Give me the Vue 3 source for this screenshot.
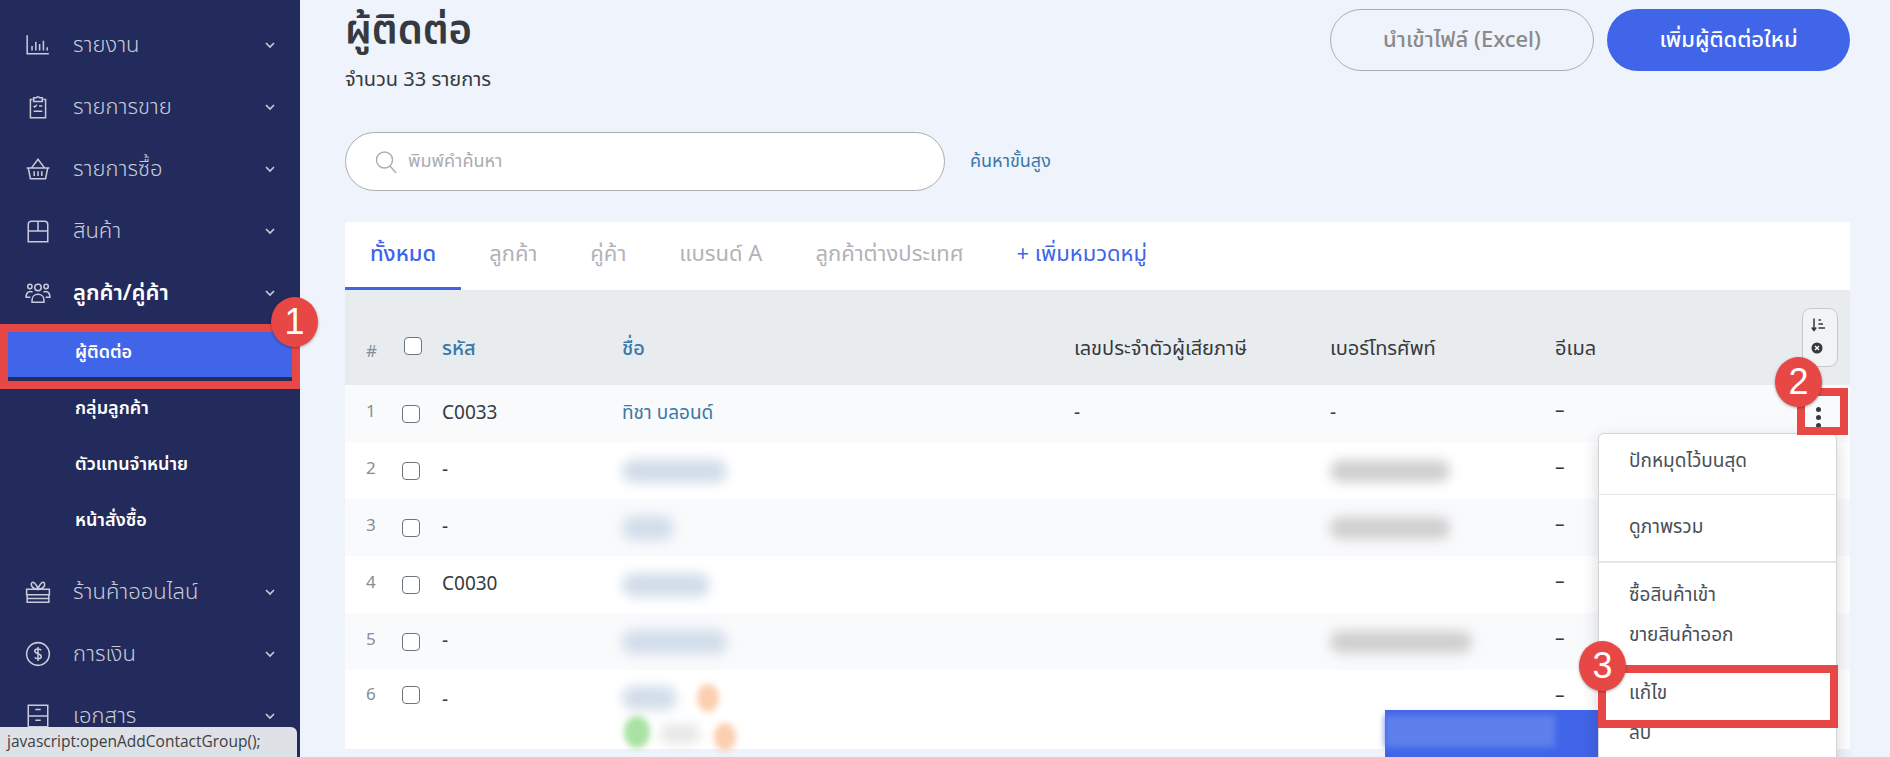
<template>
  <div class="page">
    <aside class="sidebar">
      <template v-for="item in topNav" :key="item.label">
        <div class="nav-item"><NavIcon :name="item.icon" /><span>{{ item.label }}</span><Chevron /></div>
      </template>
      <div class="nav-item open"><NavIcon name="users" /><span>ลูกค้า/คู่ค้า</span><Chevron up /></div>
      <div v-for="(s, i) in subNav" :key="s" :class="['sub-item', { active: i === 0 }]"><span>{{ s }}</span></div>
      <div class="nav-gap"></div>
      <div v-for="item in bottomNav" :key="item.label" class="nav-item"><NavIcon :name="item.icon" /><span>{{ item.label }}</span><Chevron /></div>
    </aside>

    <main class="content">
      <header class="head">
        <div>
          <h1>ผู้ติดต่อ</h1>
          <p>จำนวน 33 รายการ</p>
        </div>
        <div class="head-actions">
          <button class="btn ghost">นำเข้าไฟล์ (Excel)</button>
          <button class="btn primary">เพิ่มผู้ติดต่อใหม่</button>
        </div>
      </header>

      <div class="search-row">
        <div class="search">
          <svg width="24" height="24" viewBox="0 0 24 24" fill="none" stroke="#a9adb3" stroke-width="1.4"><circle cx="10.5" cy="10" r="8" /><path d="M16 16l6 7" /></svg>
          <span>พิมพ์คำค้นหา</span>
        </div>
        <a class="adv">ค้นหาขั้นสูง</a>
      </div>

      <section class="card">
        <div class="tabs">
          <span class="tab on">ทั้งหมด</span>
          <span v-for="t in tabs" :key="t" class="tab">{{ t }}</span>
          <span class="tab add">+ เพิ่มหมวดหมู่</span>
        </div>

        <div class="row thead">
          <span class="num hash">#</span>
          <i class="box up"></i>
          <span class="link strong">รหัส</span>
          <span class="link strong">ชื่อ</span>
          <span>เลขประจำตัวผู้เสียภาษี</span>
          <span>เบอร์โทรศัพท์</span>
          <span>อีเมล</span>
          <div class="sort-btn">
            <svg width="16" height="16" viewBox="0 0 16 16" fill="none" stroke="#343a40" stroke-width="1.5"><path d="M4 1.5v12M1.8 10.5 4 13.5l2.2-3M8.5 3h2.5M8.5 7h4.5M8.5 11h6.5" /></svg>
            <svg width="14" height="14" viewBox="0 0 14 14"><circle cx="7" cy="7" r="5.5" fill="#343a40" /><path d="M5 5l4 4M9 5l-4 4" stroke="#fff" stroke-width="1.4" /></svg>
          </div>
        </div>

        <div v-for="r in rows" :key="r.n" :class="['row', { tall: r.n === 6 }]">
          <span class="num">{{ r.n }}</span>
          <i class="box"></i>
          <span>{{ r.code }}</span>
          <span v-if="r.n === 1" class="link">ทิชา บลอนด์</span>
          <div v-else class="name-cell">
            <b class="smudge blue" :style="{ width: r.name + 'px' }"></b>
            <template v-if="r.n === 6">
              <b class="dot orange one"></b>
              <b class="dot green"></b>
              <b class="smudge grey short"></b>
              <b class="dot orange two"></b>
            </template>
          </div>
          <span class="tax-cell">{{ r.n === 1 ? '-' : '' }}</span>
          <span v-if="r.n === 1">-</span>
          <b v-else-if="r.phone" class="smudge grey" :style="{ width: r.phone + 'px' }"></b>
          <span v-else></span>
          <span class="email-dash">–</span>
        </div>
      </section>

      <div class="float-btn"><b></b></div>

      <div class="kebab"><i></i><i></i><i></i></div>

      <ul class="menu">
        <li class="pad-a">ปักหมุดไว้บนสุด</li>
        <li class="pad-a">ดูภาพรวม</li>
        <li class="pair"><span>ซื้อสินค้าเข้า</span><span>ขายสินค้าออก</span></li>
        <li class="pair last"><span>แก้ไข</span><span>ลบ</span></li>
      </ul>
    </main>

    <div class="mark mark-1"></div>
    <div class="mark mark-2"></div>
    <div class="mark mark-3"></div>
    <div class="badge badge-1">1</div>
    <div class="badge badge-2">2</div>
    <div class="badge badge-3">3</div>

    <div class="status">javascript:openAddContactGroup();</div>
  </div>
</template>

<script setup>
import { h } from 'vue'

const icons = {
  chart: 'M2 3v17h20M6.5 17v-4M10 17V9M13.5 17v-6M17 17V8M20.5 17v-3',
  clip: 'M7 5H5v17h14V5h-2M8 3.5h2.5a1.6 1.6 0 0 1 3 0H16V7H8zM8 11l1 1 2-2M13 11h3M8 16h8M8 13.5h0',
  basket: 'M1.5 11h21M3 11l2 10h14l2-10M6 11l6-8 6 8M8.5 14v4.5M12 14v4.5M15.5 14v4.5',
  box: 'M3 10V6a3 3 0 0 1 3-3h12a3 3 0 0 1 3 3v16H3zM3 12h18M12 3v9',
  users: 'M12 4a3 3 0 1 0 0 6 3 3 0 0 0 0-6zM6.500 18.500c0-7 11-7 11 0v2h-11zM4.500 4a2 2 0 1 0 0 4 2 2 0 0 0 0-4zM19.500 4a2 2 0 1 0 0 4 2 2 0 0 0 0-4zM5 16H1c0-5 3-6 6-5M19 16h4c0-5-3-6-6-5',
  gift: 'M1.500 9.500h21v5h-21zM2 14.500v7h20v-7M2 18h20M12 9.500C8 9 5 7 6 4s5 1 6 5.500zM12 9.500c4-.5 7-2.500 6-5.500s-5 1-6 5.500z',
  money: 'M12 1.500a10.500 10.500 0 1 0 0 21 10.500 10.500 0 0 0 0-21zM15 8.500c-1-1.500-6-2-6 .8 0 3 6 2 6 5 0 2.700-5 2.500-6 .7M12 5.500v13',
  doc: 'M3 2h18v20H3zM3 12h18M9.500 6h5M9.500 16h5'
}

const NavIcon = (props) => h('svg', { width: 24, height: 24, viewBox: '0 0 24 24', fill: 'none', stroke: '#c9ccd8', 'stroke-width': 1.4, class: 'nav-icon', style: 'width:26px;height:26px;flex:none' }, [
  h('path', { d: icons[props.name] })
])
NavIcon.props = ['name']

const Chevron = (props) => h('svg', { width: 12, height: 8, viewBox: '0 0 12 8', fill: 'none', stroke: '#c9ccd8', 'stroke-width': 1.6, style: 'margin-left:auto;flex:none' }, [
  h('path', { d: props.up ? 'M2 6l4-4 4 4' : 'M2 2l4 4 4-4' })
])
Chevron.props = ['up']

const topNav = [
  { icon: 'chart', label: 'รายงาน' },
  { icon: 'clip', label: 'รายการขาย' },
  { icon: 'basket', label: 'รายการซื้อ' },
  { icon: 'box', label: 'สินค้า' }
]
const subNav = ['ผู้ติดต่อ', 'กลุ่มลูกค้า', 'ตัวแทนจำหน่าย', 'หน้าสั่งซื้อ']
const bottomNav = [
  { icon: 'gift', label: 'ร้านค้าออนไลน์' },
  { icon: 'money', label: 'การเงิน' },
  { icon: 'doc', label: 'เอกสาร' }
]
const tabs = ['ลูกค้า', 'คู่ค้า', 'แบรนด์ A', 'ลูกค้าต่างประเทศ']
const rows = [
  { n: 1, code: 'C0033' },
  { n: 2, code: '-', name: 105, phone: 120 },
  { n: 3, code: '-', name: 52, phone: 120 },
  { n: 4, code: 'C0030', name: 88 },
  { n: 5, code: '-', name: 105, phone: 142 },
  { n: 6, code: '-', name: 55 }
]
</script>

<style>
html, body { margin: 0; padding: 0; overflow: hidden; }
</style>

<style scoped>
.page { position: relative; display: flex; width: 1890px; height: 757px; overflow: hidden; background: #eff3fb; font-family: "Noto Sans Thai", "Noto Sans", "Liberation Sans", sans-serif; color: #343a40; }
.sidebar { width: 300px; flex: none; box-sizing: border-box; padding-top: 14px; background: #232a5c; color: #c9ccd8; }
.nav-item { display: flex; align-items: center; height: 62px; padding: 0 24px 0 25px; font-size: 22px; font-weight: 300; }
.nav-item span { margin-left: 22px; }
.nav-item.open { color: #fff; font-weight: 600; }
.sub-item { display: flex; align-items: center; height: 56px; padding-left: 75px; color: #fff; font-size: 18px; font-weight: 600; }
.sub-item.active { height: 49px; margin: 4px 8px 3px; padding-left: 67px; background: #4065e8; }
.nav-gap { height: 13px; }

.content { position: relative; flex: 1; box-sizing: border-box; padding: 0 40px 0 45px; min-width: 0; }
.head { display: flex; justify-content: space-between; align-items: flex-start; height: 132px; }
.head h1 { margin: 6px 0 0; font-size: 40px; line-height: 52px; font-weight: 600; color: #343a40; }
.head p { margin: 8px 0 0; font-size: 20px; line-height: 28px; color: #343a40; }
.head-actions { display: flex; gap: 13px; padding-top: 9px; }
.btn { height: 62px; border-radius: 31px; font: inherit; font-size: 22px; font-weight: 500; box-sizing: border-box; }
.ghost { width: 264px; background: transparent; border: 1px solid #adb0b3; color: #8a8a8a; }
.primary { width: 243px; background: #4065e8; border: 0; color: #fff; }

.search-row { display: flex; align-items: center; height: 59px; margin-bottom: 31px; }
.search { display: flex; align-items: center; gap: 10px; width: 600px; height: 59px; box-sizing: border-box; padding-left: 28px; background: #fff; border: 1px solid #a9adb3; border-radius: 30px; color: #a9adb3; font-size: 18px; }
.adv { margin-left: 25px; color: #3a78a8; font-size: 18px; }

.card { background: #fff; }
.tabs { display: flex; height: 68px; padding-left: 25px; gap: 53px; background: #fff; font-size: 22px; line-height: 66px; color: #b0b3b8; }
.tab { position: relative; }
.tab.on { color: #4065e8; font-weight: 500; }
.tab.on::after { content: ""; position: absolute; left: -25px; right: -25px; bottom: -2px; height: 5px; background: #4065e8; }
.tab.add { color: #4065e8; }

.row { display: grid; grid-template-columns: 57px 40px 180px 452px 256px 225px 1fr; align-items: center; height: 57px; font-size: 19px; color: #343a40; background: #fff; }
.row:nth-child(odd) { background: #f9fafc; }
.thead { position: relative; height: 95px; padding-top: 22px; box-sizing: border-box; background: #e9ecef !important; font-size: 20px; }
.num { padding-left: 21px; color: #868e96; font-size: 17px; margin-top: -4px; }
.hash { padding-left: 21px; margin-top: 6px; }
.tall { height: 79px; align-items: start; padding-top: 16px; box-sizing: border-box; }
.link { color: #3a78a8; }
.strong { font-weight: 500; }
.box { display: block; width: 18px; height: 18px; box-sizing: border-box; border: 1.5px solid #6c757d; border-radius: 4px; background: #fff; }
.box.up { margin-top: -6px; margin-left: 2px; }
.name-cell { position: relative; }
.smudge { display: block; height: 24px; border-radius: 12px; filter: blur(6px); }
.smudge.blue { background: #d2ddea; }
.smudge.grey { height: 22px; background: #cfcfcf; }
.smudge.short { position: absolute; left: 38px; top: 38px; width: 40px; height: 20px; opacity: .5; }
.dot { position: absolute; border-radius: 50%; filter: blur(3px); }
.orange { width: 22px; height: 28px; background: #fbcfb0; }
.one { left: 75px; top: -2px; }
.two { left: 92px; top: 37px; }
.green { left: 2px; top: 30px; width: 26px; height: 32px; background: #a9e2a2; }
.email-dash { margin-top: -4px; }

.sort-btn { position: absolute; left: 1457px; top: 18px; display: flex; flex-direction: column; gap: 8px; padding: 8px 0 0 7px; box-sizing: border-box; width: 36px; height: 59px; border: 1px solid #c5c8cc; border-radius: 9px; background: #f1f3f5; }
.float-btn { position: absolute; left: 1085px; top: 710px; width: 213px; height: 47px; background: #4065e8; }
.float-btn b { display: block; position: absolute; left: 0; top: 5px; width: 170px; height: 32px; background: #5f80ec; filter: blur(3px); }

.kebab { position: absolute; left: 1503px; top: 405px; width: 30px; height: 24px; display: flex; flex-direction: column; align-items: center; justify-content: center; gap: 3px; }
.kebab i { width: 5px; height: 5px; border-radius: 50%; background: #343a40; }

.menu { position: absolute; left: 1298px; top: 433px; width: 239px; height: 340px; margin: 0; padding: 0; list-style: none; box-sizing: border-box; background: #fff; border: 1px solid #d2d4d7; border-radius: 6px; box-shadow: 0 6px 18px rgba(0,0,0,.16); font-size: 19px; color: #495057; }
.menu li { padding-left: 30px; }
.pad-a { height: 60px; line-height: 56px; border-bottom: 1px solid #e4e6e9; box-sizing: content-box; }
.pad-a + .pad-a { height: 66px; line-height: 66px; border-bottom-width: 2px; }
.pair { display: flex; flex-direction: column; }
.pair span { height: 40px; line-height: 40px; }
.pair { padding-top: 13px; height: 93px; box-sizing: content-box; }
.pair.last { padding-top: 0; }
.pair.last span:first-child { padding-top: 5px; }

.mark { position: absolute; box-sizing: border-box; border: 8px solid #e74845; }
.mark-1 { left: 0; top: 324px; width: 300px; height: 65px; }
.mark-2 { left: 1797px; top: 388px; width: 51px; height: 47px; }
.mark-3 { left: 1598px; top: 665px; width: 240px; height: 63px; }
.badge { position: absolute; display: flex; align-items: center; justify-content: center; width: 47px; height: 50px; border-radius: 50%; background: #e74845; color: #fff; font-family: "Liberation Sans", sans-serif; font-size: 36px; box-shadow: 0 1px 3px rgba(0,0,0,.35); }
.badge-1 { left: 271px; top: 297px; }
.badge-2 { left: 1775px; top: 357px; }
.badge-3 { left: 1579px; top: 641px; }

.status { position: absolute; left: 0; bottom: 0; width: 297px; height: 30px; box-sizing: border-box; padding-left: 7px; background: #dee1e6; border-top-right-radius: 6px; color: #3c4043; font-family: "Open Sans", sans-serif; font-size: 15.5px; line-height: 29px; white-space: nowrap; }
</style>
